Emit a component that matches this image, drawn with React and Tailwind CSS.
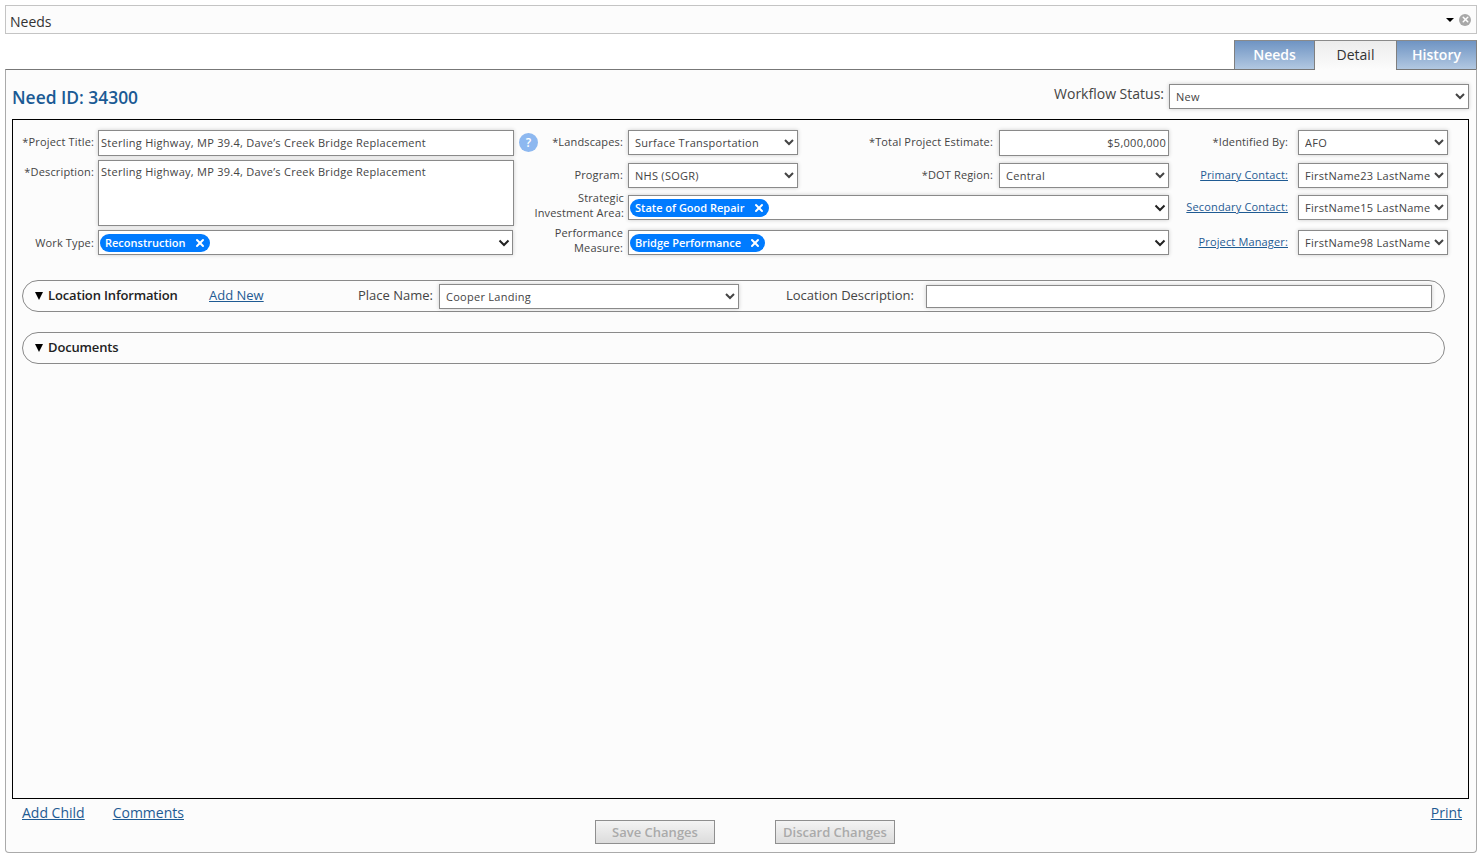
import React from 'react';
import { X } from 'lucide-react';

// shared bits
const font = { fontFamily: '"Open Sans", "Noto Sans", sans-serif' };
const field = "h-[25px] w-full border border-[#8a8a8a] bg-white text-[11px] tracking-[0.27px] text-[#444] shadow-[0_0_4px_rgba(0,0,0,0.2)] outline-none";
const selectCls = field + " pl-[2px] pr-0";
const row = "grid h-[25px] grid-cols-[94px_170px_201px_170px_129px_150px] items-center";
const linkCls = "text-[#1f5b93] underline";

const Chevron = () => (
    <svg width="12" height="8" viewBox="0 0 12 8" className="shrink-0">
        <path d="M1.5 1.5 6 6l4.5-4.5" fill="none" stroke="#222" strokeWidth="2" />
    </svg>
);

const Select = ({ value, cls = "" }) => (
    <select defaultValue={value} className={selectCls + " " + cls}>
        <option>{value}</option>
    </select>
);

const Pill = ({ label, ml }) => (
    <span className="mt-[1px] flex h-[18px] items-center rounded-full bg-[#007bff] pl-[5px] pr-[4px] text-[11px] font-semibold tracking-normal text-white">
        {label}
        <X className={ml + " h-3 w-3"} strokeWidth={4} />
    </span>
);

const TagSelect = ({ label, ml = "ml-[9px]" }) => (
    <div className={field + " flex items-center justify-between pl-[1px] pr-[2px]"}>
        <Pill label={label} ml={ml} />
        <Chevron />
    </div>
);

const Label = ({ children, cls }) => (
    <div className={"text-right text-[11px] leading-[15px] tracking-[0.15px] whitespace-nowrap text-[#444] " + cls}>{children}</div>
);

const SectionBar = ({ title, children }) => (
    <div className="ml-[9px] mr-[23px] flex h-[32px] items-center rounded-full border border-[#8a8a8a] pl-[12px]">
        <span className="mr-[5px] h-0 w-0 border-x-[4px] border-t-[8px] border-x-transparent border-t-black" />
        <span className="w-[161px] text-[13px] font-semibold tracking-[-0.15px] text-[#222]">{title}</span>
        {children}
    </div>
);

const Tab = ({ label, active }) => (
    <div className={active
        ? "relative z-10 flex h-[30px] w-[81px] items-center justify-center border-t border-t-[#8a8a8a] bg-gradient-to-b from-[#ececec] to-[#fcfcfc] pb-[2px] text-[14px] text-[#333]"
        : "flex h-[30px] w-[81px] items-center justify-center border-x border-t border-b border-x-[#7f7f7f] border-t-[#8a8a8a] border-b-[#777] bg-gradient-to-b from-[#6f94c3] to-[#b2c8e1] pb-[2px] text-[14px] font-semibold text-white"}>
        {label}
    </div>
);

const App = () => {
    return (
        <div style={font} className="flex h-[860px] flex-col overflow-hidden bg-white px-[5px] pt-[5px] pb-[7px]">
            {/* Title bar */}
            <div className="flex h-[29px] shrink-0 items-center justify-between border border-[#c4c4c4] bg-[#fcfcfc] pl-[4px] pr-[5px]">
                <span className="pt-[3px] text-[14px] text-[#333]">Needs</span>
                <div className="flex items-center gap-[5px]">
                    <span className="h-0 w-0 border-x-[4px] border-t-[4px] border-x-transparent border-t-black" />
                    <span className="flex h-[12px] w-[12px] items-center justify-center rounded-full bg-[#a8a8a8]">
                        <X className="h-[9px] w-[9px] text-white" strokeWidth={4} />
                    </span>
                </div>
            </div>

            {/* Tabs */}
            <div className="mt-[6px] flex shrink-0 justify-end">
                <Tab label="Needs" />
                <Tab label="Detail" active />
                <Tab label="History" />
            </div>

            {/* Main panel */}
            <div className="-mt-px flex min-h-0 flex-1 flex-col rounded-b-[4px] border border-[#aaa] border-t-[#777] bg-[#fcfcfc] pl-[6px] pr-[7px]">
                <div className="flex h-[49px] shrink-0 items-center justify-between pt-[5px]">
                    <h1 className="text-[17.4px] font-semibold text-[#1a5a94]">Need ID: 34300</h1>
                    <div className="-mt-[3px] flex items-center">
                        <span className="mr-[5px] -mt-[4px] text-[14px] text-[#444]">Workflow Status:</span>
                        <div className="w-[300px]"><Select value="New" /></div>
                    </div>
                </div>

                {/* Detail box */}
                <div className="flex min-h-0 flex-1 flex-col border border-black pt-[10px]">
                    <div className="flex">
                        <div className="w-[501px] shrink-0">
                            <div className="flex items-center">
                                <div className="w-[85px] shrink-0"><Label cls="pr-[4px] -mt-[3px]">*Project Title:</Label></div>
                                <input readOnly value="Sterling Highway, MP 39.4, Dave’s Creek Bridge Replacement" className={field + " !h-[26px] px-[2px] pb-[1px]"} />
                            </div>
                            <div className="mt-[4px] flex items-start">
                                <div className="w-[85px] shrink-0 pt-[4px]"><Label cls="pr-[4px]">*Description:</Label></div>
                                <textarea readOnly value="Sterling Highway, MP 39.4, Dave’s Creek Bridge Replacement" className={field + " !h-[66px] resize-none px-[2px] pt-[3px]"} />
                            </div>
                            <div className="mt-[4px] flex items-center pr-[1px]">
                                <div className="w-[85px] shrink-0"><Label cls="pr-[4px] -mt-[1px]">Work Type:</Label></div>
                                <TagSelect label="Reconstruction" ml="ml-[8px]" />
                            </div>
                        </div>

                        <div className="ml-[5px] w-[19px] shrink-0">
                            <div className="mt-[3px] flex h-[19px] w-[19px] items-center justify-center rounded-full bg-[#8db8f0] text-[12px] font-semibold text-white">?</div>
                        </div>

                        <div className="-ml-[4px]">
                            <div className={row + " !h-[26px] !items-start"}>
                                <Label cls="pr-[5px] pt-[4px]">*Landscapes:</Label>
                                <Select value="Surface Transportation" />
                                <Label cls="pr-[6px] pt-[4px]">*Total Project Estimate:</Label>
                                <input readOnly value="$5,000,000" className={field + " !h-[26px] px-[2px] pb-[1px] text-right"} />
                                <Label cls="pr-[10px] pt-[4px]">*Identified By:</Label>
                                <Select value="AFO" />
                            </div>
                            <div className={row + " mt-[7px]"}>
                                <Label cls="pr-[5px] -mt-[2px]">Program:</Label>
                                <Select value="NHS (SOGR)" />
                                <Label cls="pr-[6px] -mt-[2px]">*DOT Region:</Label>
                                <Select value="Central" />
                                <Label cls="pr-[10px] -mt-[2px]"><a className={linkCls}>Primary Contact:</a></Label>
                                <Select value="FirstName23 LastName" />
                            </div>
                            <div className={row + " mt-[7px]"}>
                                <Label cls="pr-[4px] -mt-[6px]">Strategic<br />Investment Area:</Label>
                                <div className="col-span-3"><TagSelect label="State of Good Repair" /></div>
                                <Label cls="pr-[10px] -mt-[2px]"><a className={linkCls}>Secondary Contact:</a></Label>
                                <Select value="FirstName15 LastName" cls="pb-[1px]" />
                            </div>
                            <div className={row + " mt-[10px]"}>
                                <Label cls="pr-[5px] -mt-[6px]">Performance<br />Measure:</Label>
                                <div className="col-span-3"><TagSelect label="Bridge Performance" ml="ml-[8px]" /></div>
                                <Label cls="pr-[10px] -mt-[2px]"><a className={linkCls}>Project Manager:</a></Label>
                                <Select value="FirstName98 LastName" cls="pb-[1px]" />
                            </div>
                        </div>
                    </div>

                    {/* Collapsible sections */}
                    <div className="mt-[25px]">
                        <SectionBar title="Location Information">
                            <a className={"w-[149px] text-[13px] " + linkCls}>Add New</a>
                            <span className="mr-[6px] text-[13px] text-[#444]">Place Name:</span>
                            <div className="w-[300px]"><Select value="Cooper Landing" /></div>
                            <span className="ml-[47px] mr-[12px] text-[13px] text-[#444]">Location Description:</span>
                            <input readOnly className="h-[23px] w-[506px] border border-[#8a8a8a] bg-white shadow-[0_0_4px_rgba(0,0,0,0.2)]" />
                        </SectionBar>
                    </div>
                    <div className="mt-[20px]">
                        <SectionBar title="Documents" />
                    </div>
                </div>

                {/* Footer */}
                <div className="h-[53px] shrink-0">
                    <div className="flex justify-between pl-[10px] pr-[7px] pt-[3px] text-[14px]">
                        <div className="flex gap-[28px]">
                            <a className={linkCls}>Add Child</a>
                            <a className={linkCls}>Comments</a>
                        </div>
                        <a className={linkCls}>Print</a>
                    </div>
                    <div className="mt-[-3px] ml-[583px] flex gap-[60px]">
                        <button className="h-[24px] w-[120px] border border-[#8f8f8f] bg-gradient-to-b from-[#f4f4f4] to-[#dcdcdc] pt-[1px] text-[13px] font-semibold text-[#aaa]">Save Changes</button>
                        <button className="h-[24px] w-[120px] border border-[#8f8f8f] bg-gradient-to-b from-[#f4f4f4] to-[#dcdcdc] pt-[1px] text-[13px] font-semibold text-[#aaa]">Discard Changes</button>
                    </div>
                </div>
            </div>
        </div>
    );
};

export default App;
